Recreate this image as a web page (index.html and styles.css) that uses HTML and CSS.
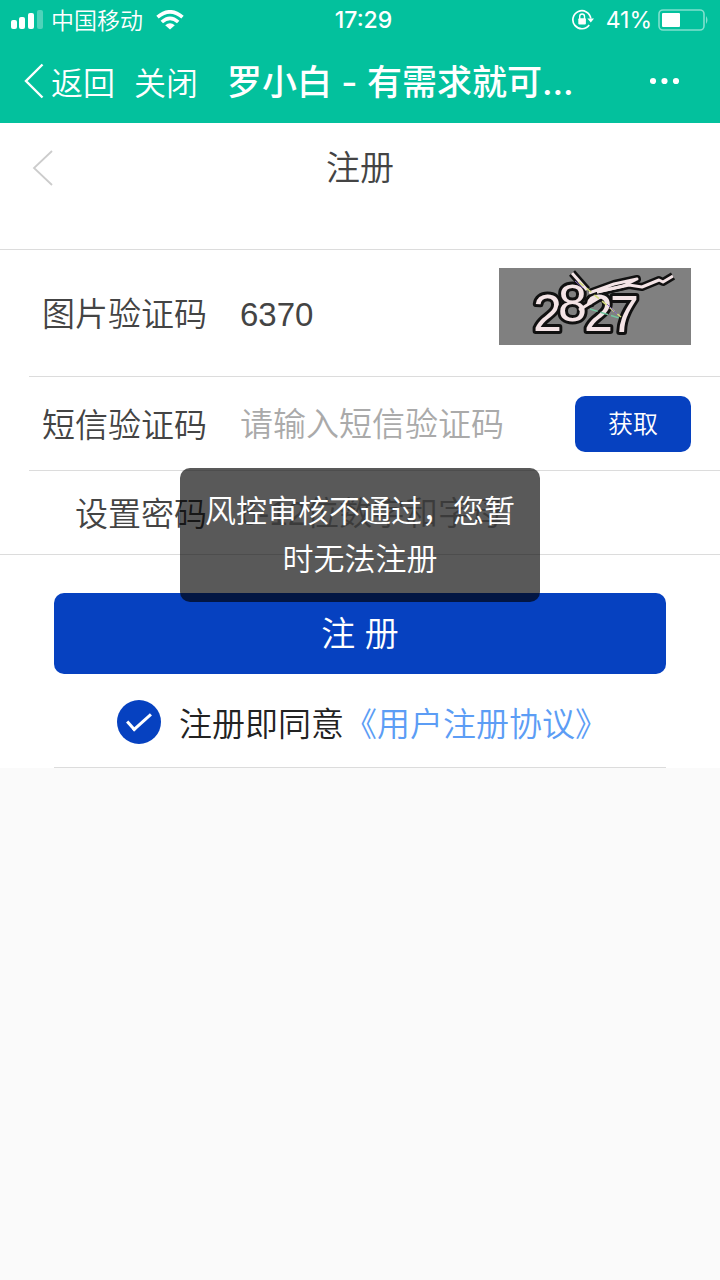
FILE: index.html
```html
<!DOCTYPE html>
<html lang="zh-CN">
<head>
<meta charset="utf-8">
<meta name="viewport" content="width=device-width, initial-scale=1">
<title>注册</title>
<link rel="stylesheet" href="styles.css">
</head>
<body>
<header class="top">
  <div class="status">
    <div class="status-left">
      <svg class="signal" width="32" height="20" viewBox="0 0 32 20" fill="#fff" aria-hidden="true">
        <rect x="0" y="10" width="6" height="9" rx="2"/><rect x="8" y="7" width="6" height="12" rx="2"/><rect x="17" y="3" width="6" height="16" rx="2"/><rect x="26" y="0" width="6" height="19" rx="2" opacity=".3"/>
      </svg>
      <span class="carrier">中国移动</span>
      <svg width="28" height="20" viewBox="0 0 28 20" fill="none" stroke="#fff" stroke-width="3.6" aria-hidden="true">
        <path d="M1.5 7.2Q14-3.6 26.5 7.2"/><path d="M5.8 12Q14 4.6 22.2 12"/><path d="M9.2 15.3Q14 11.2 18.8 15.3L14 19.5Z" fill="#fff" stroke="none"/>
      </svg>
    </div>
    <time class="clock">17:29</time>
    <div class="status-right">
      <svg width="22" height="22" viewBox="0 0 22 22" fill="none" stroke="#fff" stroke-width="1.7" aria-hidden="true">
        <path d="M18.8 9.5A9 9 0 1 0 17.2 16"/><path d="M15.3 9.5H22L18.8 13.5Z" fill="#fff" stroke="none"/><rect x="6.3" y="9.3" width="7.6" height="6.2" rx="1" fill="#fff" stroke="none"/><path d="M7.7 10V7.4a2.4 2.4 0 0 1 4.8 0V10" stroke-width="1.4"/>
      </svg>
      <span class="percent">41%</span>
      <svg class="battery" width="52" height="22" viewBox="0 0 52 22" aria-hidden="true">
        <rect x="1" y="1" width="45" height="20" rx="4" fill="none" stroke="#fff" stroke-width="1.6" opacity=".5"/><rect x="4" y="4" width="18" height="14" rx="1" fill="#fff"/><path d="M48 7q3 4 0 8Z" fill="#fff" opacity=".5"/>
      </svg>
    </div>
  </div>
  <nav class="nav">
    <a class="nav-link" href="#back"><svg width="20" height="36" viewBox="0 0 20 36" fill="none" stroke="#fff" stroke-width="2.4" aria-hidden="true"><path d="M18.5 1.5 2 18 18.5 34.5"/></svg>返回</a>
    <a class="nav-link close" href="#close">关闭</a>
    <div class="nav-title">罗小白 - 有需求就可...</div>
    <button class="more" type="button" aria-label="更多"><svg width="30" height="8" viewBox="0 0 30 8" fill="#fff"><circle cx="3" cy="4" r="3.1"/><circle cx="14.5" cy="4" r="3.1"/><circle cx="26" cy="4" r="3.1"/></svg></button>
  </nav>
</header>
<main class="page">
  <div class="page-head">
    <a class="back" href="#prev" aria-label="返回"><svg width="22" height="36" viewBox="0 0 22 36" fill="none" stroke="#ccc" stroke-width="1.8"><path d="M20 1 2 18 20 35"/></svg></a>
    <h1 class="page-title">注册</h1>
  </div>
  <form>
    <div class="fields">
      <div class="row row-tall">
        <label class="label" for="captcha">图片验证码</label>
        <input class="input" id="captcha" type="text" value="6370">
        <svg class="captcha" width="192" height="77" viewBox="0 0 192 77" role="img" aria-label="图片验证码">
          <rect width="192" height="77" fill="#808080"/>
          <g class="scribble-edge"><path d="M73 5 88 22"/><path d="M90 25 115 16 138 11 124 18 98 24"/><path d="M98 24 130 17 143 19 160 12 164 14 174 8"/><path d="M80 42 103 28"/></g>
          <text class="captcha-digits" x="34 59 85 111" y="63 53 63 64">2827</text>
          <g class="scribble"><path d="M73 5 88 22"/><path d="M90 25 115 16 138 11 124 18 98 24"/><path d="M98 24 130 17 143 19 160 12 164 14 174 8"/><path d="M80 42 103 28"/></g>
          <path d="M80 14 122 49" stroke="#d5dc7e" stroke-width="1.6" stroke-dasharray="6 4"/>
          <path d="M91 41 120 50" stroke="#6fc9a0" stroke-width="1.5" stroke-dasharray="8 3"/><path d="M76 13 84 20M108 36 118 46" stroke="#8a6ac0" stroke-width="1"/>
        </svg>
      </div>
      <div class="row row-sms">
        <label class="label" for="sms">短信验证码</label>
        <input class="input" id="sms" type="text" placeholder="请输入短信验证码">
        <button class="get" type="button">获取</button>
      </div>
      <div class="row row-pass">
        <label class="label" for="pass">设置密码</label>
        <input class="input" id="pass" type="password" placeholder="6-12位数字和字母">
      </div>
    </div>
    <div class="actions">
      <button class="submit" type="submit">注 册</button>
      <div class="agree">
        <input class="check" id="agree" type="checkbox" checked>
        <label for="agree">注册即同意</label><a class="terms" href="#terms">《用户注册协议》</a>
      </div>
    </div>
  </form>
</main>
<div class="toast" role="alert">风控审核不通过，您暂时无法注册</div>
</body>
</html>
```

FILE: styles.css
```css
* { box-sizing: border-box; }
body {
  position: relative;
  margin: 0;
  min-height: 100vh;
  background: #fafafa;
  color: #444;
  font-family: "Liberation Sans", "Noto Sans CJK SC", sans-serif;
  font-size: 33px;
  font-weight: 350;
}
a { color: inherit; text-decoration: none; }
button, input { font: inherit; border: 0; margin: 0; padding: 0; }
svg { display: block; flex: none; }

.top { background: #03c19d; color: #fff; }
.status {
  display: grid;
  grid-template-columns: 1fr auto 1fr;
  align-items: center;
  height: 40px;
  padding: 0 10px 0 11px;
}
.status-left, .status-right { display: flex; align-items: center; }
.carrier { margin: 0 13px 0 8px; padding-bottom: 2px; font-size: 23px; }
.clock { padding-left: 6px; font: 500 23px Inter, sans-serif; }
.status-right { justify-content: flex-end; }
.percent { margin: 0 6px 0 12px; font: 400 23px Inter, sans-serif; }

.nav { display: flex; align-items: center; height: 83px; padding: 0 40px 2px 24px; font-size: 32px; }
.nav-link { display: flex; align-items: center; gap: 7px; white-space: nowrap; }
.close { margin-left: 19px; }
.nav-title {
  flex: 1;
  margin-left: 29px;
  padding-bottom: 2px;
  font-family: Inter, "Noto Sans CJK SC", sans-serif;
  font-size: 35px;
  font-weight: 500;
  white-space: nowrap;
}
.more { background: none; }

.page { background: #fff; }
.page-head {
  display: grid;
  grid-template-columns: 1fr auto 1fr;
  align-items: center;
  padding: 20px 32px 57px;
}
.page-title { margin: 0; padding-top: 2px; font-size: 34px; font-weight: 350; line-height: 47px; }

.fields { padding-left: 29px; border: solid #dcdcdc; border-width: 1px 0; }
.row { display: flex; align-items: center; padding: 0 29px 0 13px; }
.row + .row { border-top: 1px solid #dcdcdc; }
.row-tall { height: 126px; }
.row-sms { height: 94px; }
.row-pass { height: 84px; }
.label { width: 165px; flex: none; padding-bottom: 2px; text-align: right; white-space: nowrap; }
.input {
  flex: 1;
  min-width: 0;
  margin-left: 33px;
  padding-top: 3px;
  background: none;
  color: #444;
  outline: 0;
}
.input::placeholder { color: #aaa; opacity: 1; }
.captcha { align-self: flex-start; margin-top: 18px; overflow: visible; }
.captcha-digits {
  fill: #f4e4e6;
  stroke: #111;
  stroke-width: 6px;
  stroke-linejoin: round;
  paint-order: stroke;
  font: 400 52px "Liberation Sans", sans-serif;
}
.scribble, .scribble-edge { fill: none; stroke: #f4e4e6; stroke-width: 3; stroke-linejoin: round; }
.scribble-edge { stroke: #111; stroke-width: 8; }
.get {
  width: 116px;
  height: 56px;
  padding-bottom: 3px;
  border-radius: 10px;
  background: #0641c0;
  color: #fff;
  font-size: 25px;
}

.actions { margin: 0 54px; padding-top: 38px; border-bottom: 1px solid #dcdcdc; }
.submit {
  display: block;
  width: 100%;
  height: 81px;
  padding-bottom: 4px;
  border-radius: 10px;
  background: #0641c0;
  color: #fff;
  font-size: 34px;
}
.agree { display: flex; align-items: center; height: 93px; padding: 3px 0 0 63px; color: #222; white-space: nowrap; }
.check {
  appearance: none;
  flex: none;
  display: grid;
  place-items: center;
  width: 44px;
  height: 44px;
  margin-right: 18px;
  border-radius: 50%;
  background: #0641c0;
}
.check:checked::before {
  content: "";
  width: 21px;
  height: 9px;
  margin-bottom: 6px;
  border: solid #fff;
  border-width: 0 0 3px 3px;
  rotate: -42deg;
}
.terms { color: #5c9df5; }

.toast {
  position: absolute;
  top: 468px;
  left: 25%;
  width: 50%;
  padding: 20px 24px 18px;
  border-radius: 10px;
  background: rgba(0, 0, 0, .65);
  color: #fff;
  font-size: 31px;
  line-height: 48px;
  text-align: center;
}
```
